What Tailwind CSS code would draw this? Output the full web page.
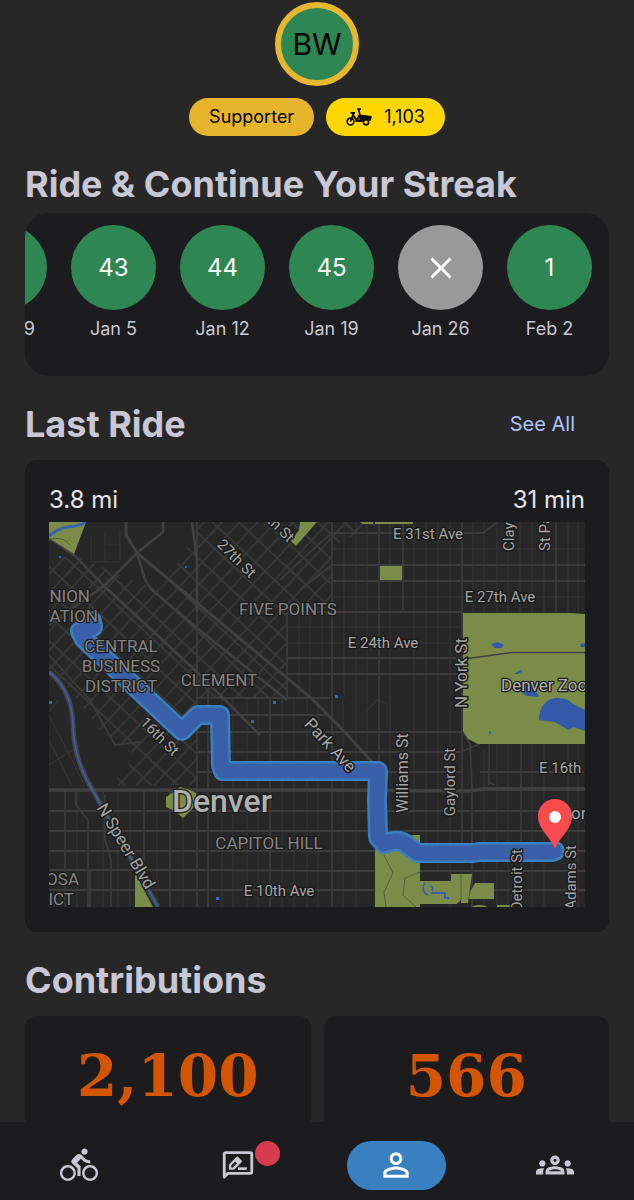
<!DOCTYPE html>
<html lang="en">
<head>
  <meta charset="UTF-8" />
  <meta name="viewport" content="width=device-width, initial-scale=1" />
  <title>Profile</title>
  <script src="https://cdn.jsdelivr.net/npm/@tailwindcss/browser@4"></script>
</head>
<body class="bg-[#272727] text-[#c8c7d3] font-['Inter',sans-serif] h-screen flex flex-col overflow-hidden">

  <main class="flex-1 min-h-0 overflow-y-auto [scrollbar-width:none] px-[25px] pt-0.5">

    <!-- Avatar and badges -->
    <div class="flex flex-col items-center gap-3">
      <div class="size-[84px] rounded-full bg-[#2e8653] border-6 border-[#e6b830] text-black text-3xl flex items-center justify-center">BW</div>
      <div class="flex gap-3 text-black text-lg">
        <span class="h-[38px] px-5 rounded-full bg-[#e6b52c] flex items-center">Supporter</span>
        <span class="h-[38px] px-5 rounded-full bg-[#ffd600] flex items-center gap-3">
          <svg class="w-[26px] h-[18px]" viewBox="0 0 26 18" fill="none" stroke="black" stroke-width="1.6" aria-hidden="true">
            <circle cx="4.500" cy="13.500" r="3.400" />
            <path d="M4.500 13.500L7.500 5.500M7 7L11.500 13.500M10.500 13L13.500 7M4.500 4.800h4.500" stroke-width="1.800" />
            <path d="M11 1h4M12.500 1l1.500 6" />
            <path d="M13 6.500L25.500 8V10.500l-1.200 2.500h-.6a4 4 0 0 0-7.400 1H9.500v-2l4-.5z" fill="black" stroke="none" />
            <circle cx="20" cy="14.200" r="2.600" />
          </svg>
          1,103
        </span>
      </div>
    </div>

    <h2 class="mt-6 text-4xl leading-[48px] font-bold">Ride &amp; Continue Your Streak</h2>
    <section class="mt-[5px] h-[163px] rounded-3xl bg-[#1c1c1e] overflow-hidden flex justify-end gap-6 pt-3 pr-[17px] text-lg">
      <div class="w-[85px] shrink-0 flex flex-col items-center gap-[5px]">
        <div class="size-[85px] rounded-full bg-[#2e8653] text-white text-2xl flex items-center justify-center">42</div>
        <span>Dec 29</span>
      </div>
      <div class="w-[85px] shrink-0 flex flex-col items-center gap-[5px]">
        <div class="size-[85px] rounded-full bg-[#2e8653] text-white text-2xl flex items-center justify-center">43</div>
        <span>Jan 5</span>
      </div>
      <div class="w-[85px] shrink-0 flex flex-col items-center gap-[5px]">
        <div class="size-[85px] rounded-full bg-[#2e8653] text-white text-2xl flex items-center justify-center">44</div>
        <span>Jan 12</span>
      </div>
      <div class="w-[85px] shrink-0 flex flex-col items-center gap-[5px]">
        <div class="size-[85px] rounded-full bg-[#2e8653] text-white text-2xl flex items-center justify-center">45</div>
        <span>Jan 19</span>
      </div>
      <div class="w-[85px] shrink-0 flex flex-col items-center gap-[5px]">
        <div class="size-[85px] rounded-full bg-[#999999] text-white flex items-center justify-center">
          <svg class="size-9" viewBox="0 0 24 24" fill="currentColor" role="img" aria-label="Missed"><path d="M19 6.410L17.590 5 12 10.590 6.410 5 5 6.410 10.590 12 5 17.590 6.410 19 12 13.410 17.590 19 19 17.590 13.410 12z" /></svg>
        </div>
        <span>Jan 26</span>
      </div>
      <div class="w-[85px] shrink-0 flex flex-col items-center gap-[5px]">
        <div class="size-[85px] rounded-full bg-[#2e8653] text-white text-2xl flex items-center justify-center">1</div>
        <span>Feb 2</span>
      </div>
    </section>

    <div class="mt-6 flex items-center justify-between">
      <h2 class="text-4xl leading-[48px] font-bold">Last Ride</h2>
      <a href="#" class="pr-[34px] text-xl text-[#adc2fb]">See All</a>
    </div>
    <section class="mt-3 rounded-xl bg-[#1c1c1e] px-6 py-[25px]">
      <div class="flex justify-between text-2xl leading-[30px] text-[#e6e4ea] pb-[7px]">
        <span>3.8 mi</span>
        <span>31 min</span>
      </div>
      <svg class="block w-full h-auto" viewBox="49 522 536 385" role="img" aria-label="Route map">
        <defs>
          <!-- street grids: diagonal downtown, square elsewhere -->
          <pattern id="downtown" width="18" height="13" patternUnits="userSpaceOnUse" patternTransform="translate(137 553) rotate(-47)">
            <path d="M2 0V13M0 2H18" stroke="#3a3a3a" stroke-width="1.600" />
          </pattern>
          <clipPath id="downtownArea">
            <path d="M49 560L75 555 120 575 160 590 180 560 200 522H385L332 545V612H287V698H197V785H112L135 755 100 730 70 690 49 672z" />
          </clipPath>
        </defs>
        <rect x="49" y="522" width="536" height="385" fill="#272727" />
        <rect x="49" y="522" width="536" height="385" fill="url(#downtown)" clip-path="url(#downtownArea)" />

        <g fill="none" stroke="#343434" stroke-width="1.200">
          <path d="M344 522V698M356 522V907M367 522V760M390 522V907M414 522V907M426 522V845M438 522V870M450 522V907M473 522V612M484 522V612M497 522V612M508 522V612M520 522V612M532 522V612M544 522V612M568 522V612M578 522V612" />
          <path d="M299 612V698M310 612V698M322 612V698M222 698V907M233 698V907M247 698V907M258 698V907M282 698V907M294 698V907M307 698V907M318 698V907M343 698V907" />
          <path d="M484 750V907M497 744V907M508 744V907M532 744V907M544 744V907M568 744V907M578 744V907M77 790V907M103 790V907M118 790V907M130 790V907M157 790V907M183 790V907" />
          <path d="M332 549H585M332 597H585M287 627H462M287 643H462M91 536V562H120V530M104 545H120M105 532V562" />
          <path d="M49 740L72 786M49 715L85 786M58 700L49 712M49 765L80 745M365 712l12-12 10 3v25" />
        </g>
        <g fill="none" stroke="#3b3b3b" stroke-width="1.800">
          <path d="M197 520V907M208 690V907M332 522V790M379 522V907M403 522V612M462 522V860M556 522V612M287 612V698M270 698V907M332 790V907M521 744V907M144 790V907M170 790V907M65 790V907M90 870V907" />
          <path d="M332 533H483L497 522M332 565H585M332 581H585M287 612H462M287 658H462M287 674H462M197 698H330M197 715H330M197 732H462M197 752H460L480 744M197 772H462M585 772H480" />
          <path d="M49 811H585M49 831H585M49 851H585M49 870H220L330 871H585M49 890H585" />
          <path d="M489 744V785q0-5 5 0M462 730L470 744 472 785V907M49 655L90 700 115 745 140 742M76 790V805L88 820V907M105 795V840L111 860V907M332 533L310 552 280 580M332 565L300 590" />
        </g>
        <g fill="none" stroke="#404040">
          <path d="M49 790H330L470 791 483 789H585" stroke-width="3.500" />
          <path d="M126 522V535L137 553 310 697 340 727 375 765" stroke-width="3" />
          <path d="M49 538L75 556 104 586 197 672 260 735M137 553L145 580 152 590 197 628 287 700M192 522L197 560V612M104 586L137 553 163 532V522M49 625L104 586" stroke-width="2.500" />
        </g>

        <!-- parks -->
        <g fill="#7a8c47">
          <path d="M49 522H86L74 554 49 538z" />
          <path d="M300 522H317L296 546 291 541 299 530z" />
          <path d="M360 522h13v2h-10zM375 522h38v2h-38z" />
          <path d="M380 566H402V580H380z" />
          <path d="M463 613H570L585 614V744H478L468 739 463 731z" />
          <path d="M166 797L172 793 180 787 190 790 196 793V805L183 818 175 811 166 807z" />
          <path d="M135 873L153 907H135z" />
          <path d="M375 843H398L413 835H420V881H451V874H472L468 903H461V900L457 904H420V907H375z" />
          <path d="M475 883L494 883V899H469L470 892z" />
          <path d="M471 907q8-4 17 0zM497 905H512V907H497z" />
        </g>
        <g fill="none" stroke="#55603a" stroke-width="1">
          <path d="M384 855L393 873 384 892 386 907M420 872L405 878 403 895 416 907M461 875V900M49 540Q62 535 70 545" />
          <path d="M464 659L512 652.500H585" stroke="#414141" stroke-width="1.600" />
        </g>

        <!-- water -->
        <g fill="#3359a8">
          <path d="M491 644l7-2 6 3-3 3h-6zM580 644l5-1v4h-4zM514 674l6-4 3 1-5 3zM514 688l7-5 14 5 4 9-12-1z" />
          <path d="M539 716Q542 700 555 698 568 697 573 704L585 710V731L574 727 568 730 555 722 539 720z" />
        </g>
        <g fill="none" stroke="#3a5db5">
          <path d="M49 536Q60 527 68 527T86 522" stroke-width="3" stroke="#3762ad" />
          <path d="M49 672Q72 690 73 725T92 789L158 907" stroke="#444444" stroke-width="5" />
          <path d="M49 672Q72 690 73 725T92 789L158 907" stroke-width="1.600" />
          <path d="M425 883q-4 5 0 10l3 2M430 886q4 1 2 5M431 893H445V898H449" stroke-width="1.800" />
        </g>
        <g fill="#3a67b5">
          <rect x="59" y="556" width="2" height="2" />
          <rect x="185" y="566" width="2" height="2" />
          <rect x="49" y="701" width="3" height="3" />
          <rect x="273" y="701" width="3" height="3" />
          <rect x="251" y="720" width="3" height="3" />
          <rect x="335" y="695" width="3" height="3" />
          <rect x="216" y="897" width="3" height="3" />
          <rect x="489" y="731" width="2" height="3" />
        </g>

        <!-- route -->
        <g fill="none" stroke-linecap="round" stroke-linejoin="round">
          <path d="M92 621L93 627 80 631 84 639 182 731 198 715H220L221 765 223 771H378L377 800 378 837 384 844Q400 837 408 846L418 853H473L479 852H552L555 851" stroke="#3980c0" stroke-width="20" />
          <path d="M92 621L93 627 80 631 84 639 182 731 198 715H220L221 765 223 771H378L377 800 378 837 384 844Q400 837 408 846L418 853H473L479 852H552L555 851" stroke="#395fa8" stroke-width="15" />
        </g>

        <!-- labels -->
        <g class="font-['Roboto',sans-serif] text-[15px]" fill="#a4a4a4" stroke="#1b1b1b" stroke-width="3" stroke-linejoin="round" paint-order="stroke" text-anchor="middle">
          <text x="428" y="539">E 31st Ave</text>
          <text x="500" y="602">E 27th Ave</text>
          <text x="383" y="648">E 24th Ave</text>
          <text x="279" y="896">E 10th Ave</text>
          <text x="539" y="773" text-anchor="start">E 16th Ave</text>
          <text transform="translate(514 551) rotate(-90)" text-anchor="start">Clayton St</text>
          <text transform="translate(550 551) rotate(-90)" text-anchor="start">St Paul St</text>
          <text transform="translate(467 673) rotate(-90)" class="text-[17px]">N York St</text>
          <text transform="translate(408 773) rotate(-90)" class="text-base">Williams St</text>
          <text transform="translate(455 782) rotate(-90)">Gaylord St</text>
          <text transform="translate(522 849) rotate(-90)" text-anchor="end">Detroit St</text>
          <text transform="translate(576 845) rotate(-90)" text-anchor="end">Adams St</text>
          <text transform="translate(233 562) rotate(45)">27th St</text>
          <text transform="translate(288 543) rotate(45)" text-anchor="end">28th St</text>
          <text transform="translate(156 740) rotate(45)">16th St</text>
          <text transform="translate(326 749) rotate(47)" class="text-[17px]">Park Ave</text>
          <text transform="translate(121 849) rotate(59)" class="text-[17px]">N Speer Blvd</text>
          <text x="571" y="819" class="text-[17px]" text-anchor="start">or</text>
        </g>
        <g class="font-['Roboto',sans-serif] text-[17px]" fill="#858585" stroke="#1b1b1b" stroke-width="2.500" stroke-linejoin="round" paint-order="stroke" text-anchor="middle">
          <text x="288" y="615">FIVE POINTS</text>
          <text x="219" y="686">CLEMENT</text>
          <text x="121" y="652">CENTRAL</text>
          <text x="121" y="672">BUSINESS</text>
          <text x="121" y="692">DISTRICT</text>
          <text x="90" y="602" text-anchor="end">UNION</text>
          <text x="98" y="622" text-anchor="end">STATION</text>
          <text x="269" y="849">CAPITOL HILL</text>
          <text x="79" y="885" text-anchor="end">ALAMOSA</text>
          <text x="74" y="905" text-anchor="end">DISTRICT</text>
          <text x="501" y="691" text-anchor="start" fill="#b0b0b0">Denver Zoo</text>
          <text x="222" y="812" class="text-[32px] font-medium" fill="#b0b0b0">Denver</text>
        </g>

        <!-- destination pin -->
        <path d="M555 849C549 835 538 829 538 816A17 17 0 0 1 572 816C572 829 561 835 555 849z" fill="#fb4b4e" />
        <circle cx="555" cy="817" r="6" fill="white" />
      </svg>
    </section>

    <h2 class="mt-6 text-4xl leading-[48px] font-bold">Contributions</h2>
    <section class="mt-3 grid grid-cols-2 gap-[13px] font-['DejaVu_Serif',serif] font-bold text-[58px] leading-[72px] text-[#d45500] text-center">
      <div class="h-[200px] rounded-xl bg-[#1c1c1e] pt-6">2,100</div>
      <div class="h-[200px] rounded-xl bg-[#1c1c1e] pt-6">566</div>
    </section>
  </main>

  <nav class="h-[78px] shrink-0 bg-[#1c1c1e] grid grid-cols-4 items-center pt-2">
    <a href="#" aria-label="Rides" class="flex justify-center">
      <svg class="size-[38px]" viewBox="0 0 24 24" fill="currentColor"><path d="M15.500 5.500c1.100 0 2-.9 2-2s-.9-2-2-2-2 .9-2 2 .9 2 2 2zM5 12c-2.800 0-5 2.200-5 5s2.200 5 5 5 5-2.200 5-5-2.200-5-5-5zm0 8.500c-1.900 0-3.500-1.600-3.500-3.500s1.600-3.500 3.500-3.500 3.500 1.600 3.500 3.500-1.600 3.500-3.500 3.500zm5.800-10l2.400-2.400.8.800c1.300 1.300 3 2.100 5.100 2.100V9c-1.500 0-2.700-.6-3.600-1.500l-1.900-1.900c-.5-.4-1-.6-1.600-.6s-1.100.2-1.400.6L7.800 8.400c-.4.4-.6.9-.6 1.400 0 .6.2 1.100.6 1.400L11 14v5h2v-6.200l-2.200-2.300zM19 12c-2.800 0-5 2.200-5 5s2.200 5 5 5 5-2.200 5-5-2.200-5-5-5zm0 8.500c-1.900 0-3.500-1.600-3.500-3.500s1.600-3.500 3.500-3.500 3.500 1.600 3.500 3.500-1.600 3.500-3.500 3.500z" /></svg>
    </a>
    <a href="#" aria-label="Feedback, new items" class="flex justify-center">
      <span class="relative">
        <svg class="size-[38px]" viewBox="0 0 24 24" fill="none" stroke="currentColor" stroke-width="1.800" stroke-linejoin="round">
          <path d="M3.300 19.500V5.200q0-1 1-1H19.700q1 0 1 1V16.300q0 1-1 1H5.500z" />
          <path d="M7 14.300V12L11.500 7.500 13.700 9.700 9.200 14.300z" stroke-width="1.500" />
          <path d="M10 9l2.200 2.200 1.500-1.500L11.500 7.500z" fill="currentColor" stroke-width="1" />
          <path d="M12 14.300H17.500" stroke-width="1.700" />
        </svg>
        <span class="absolute left-9 -top-[5px] size-[25px] rounded-full bg-[#d83b4e]"></span>
      </span>
    </a>
    <a href="#" aria-label="Profile" aria-current="page" class="flex justify-center">
      <span class="w-[99px] h-[49px] rounded-full bg-[#3980c0] text-white flex items-center justify-center">
        <svg class="size-[38px]" viewBox="0 0 24 24" fill="currentColor"><path d="M12 5.900c1.160 0 2.100.94 2.100 2.100s-.94 2.100-2.100 2.100S9.900 9.160 9.900 8s.94-2.100 2.100-2.100m0 9c2.970 0 6.100 1.460 6.100 2.100v1.100H5.900V17c0-.64 3.130-2.100 6.100-2.100M12 4C9.790 4 8 5.790 8 8s1.790 4 4 4 4-1.790 4-4-1.790-4-4-4zm0 9c-2.670 0-8 1.340-8 4v3h16v-3c0-2.660-5.330-4-8-4z" /></svg>
      </span>
    </a>
    <a href="#" aria-label="Community" class="flex justify-center">
      <svg class="size-[38px]" viewBox="0 0 24 24" fill="currentColor"><path d="M4 13c1.100 0 2-.9 2-2s-.9-2-2-2-2 .9-2 2 .9 2 2 2zm1.130 1.100c-.37-.06-.74-.1-1.130-.1-.99 0-1.930.21-2.780.58C.48 14.900 0 15.620 0 16.430V18h4.500v-1.610c0-.83.23-1.610.63-2.290zM20 13c1.100 0 2-.9 2-2s-.9-2-2-2-2 .9-2 2 .9 2 2 2zm4 3.430c0-.81-.48-1.530-1.220-1.850-.85-.37-1.790-.58-2.780-.58-.39 0-.76.04-1.130.1.4.68.63 1.460.63 2.290V18H24v-1.570zM16.240 13.650c-1.170-.52-2.610-.9-4.240-.9s-3.070.39-4.240.9C6.680 14.130 6 15.210 6 16.390V18h12v-1.610c0-1.180-.68-2.260-1.760-2.740zM8.070 16c.09-.23.13-.39.91-.69.97-.38 1.990-.56 3.020-.56s2.050.18 3.020.56c.77.3.81.46.91.69H8.070zM12 8c.55 0 1 .45 1 1s-.45 1-1 1-1-.45-1-1 .45-1 1-1m0-2c-1.660 0-3 1.340-3 3s1.340 3 3 3 3-1.340 3-3-1.340-3-3-3z" /></svg>
    </a>
  </nav>

</body>
</html>
